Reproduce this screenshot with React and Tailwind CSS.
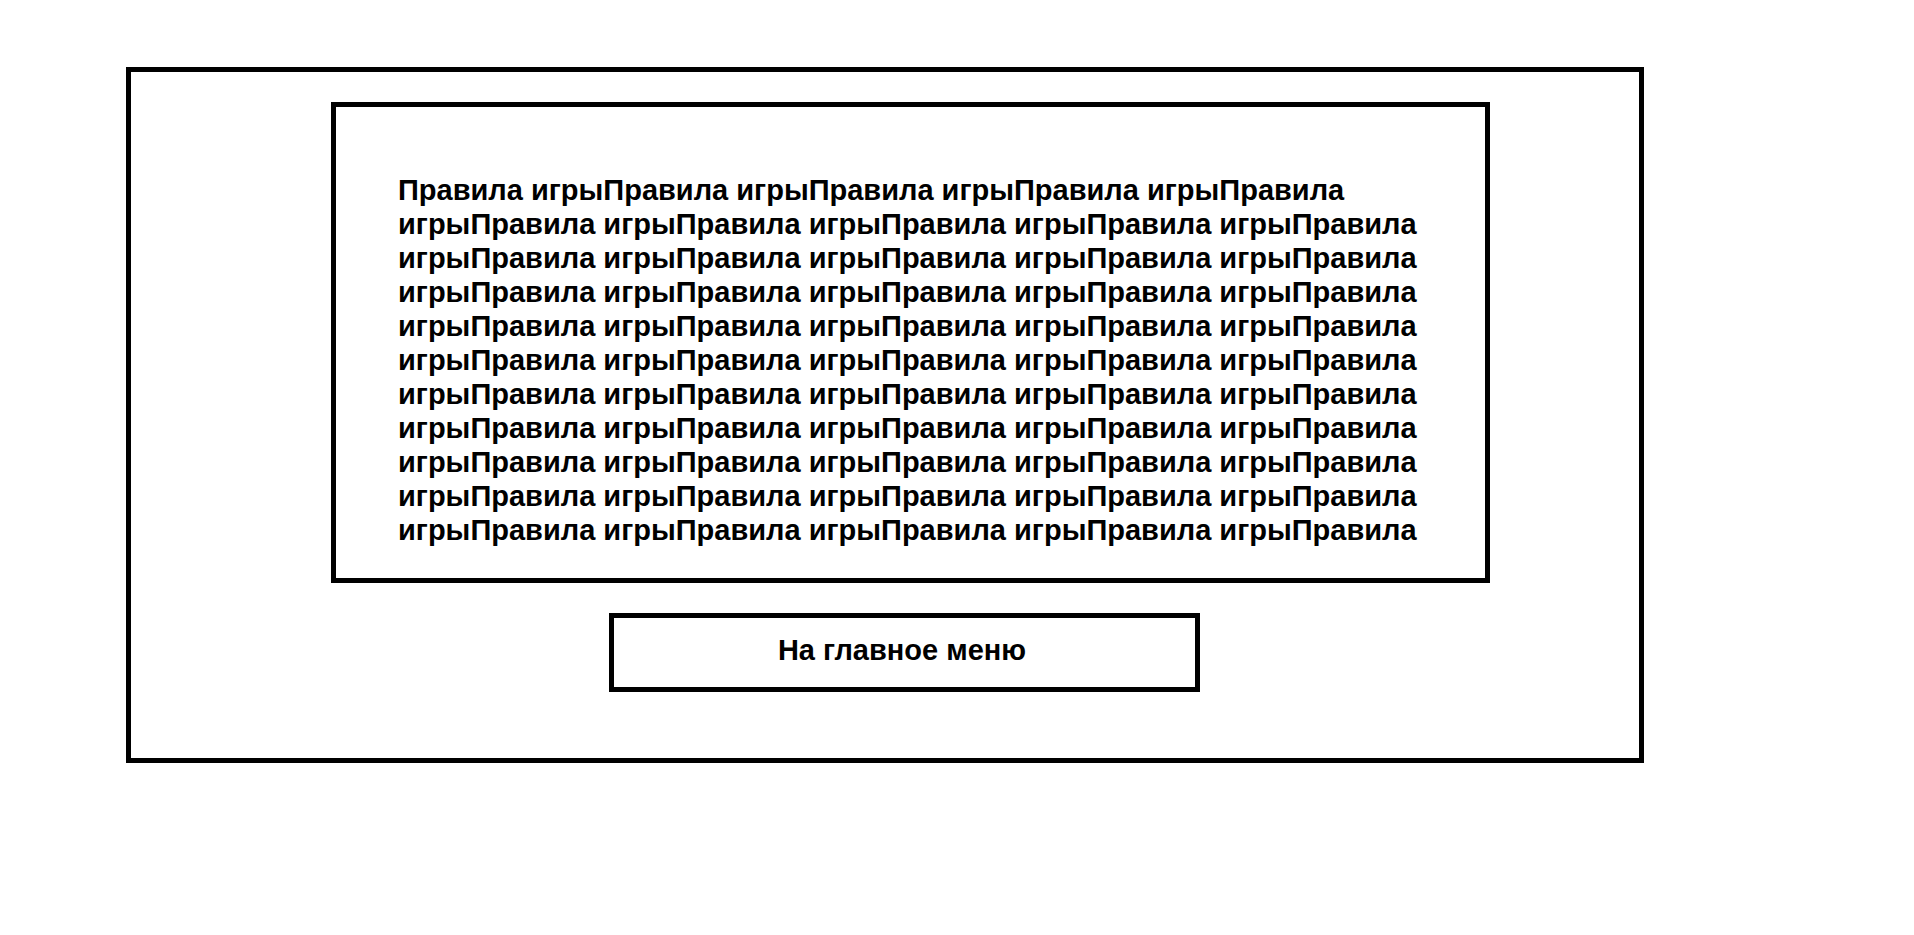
const RULES = "Правила игры".repeat(54) + "Правила";

export default function App() {
  return (
    <div className="min-h-screen bg-white pt-[67px] pl-[126px]" style={{ fontFamily: '"Liberation Sans", Arial, sans-serif' }}>
      <div className="w-[1518px] h-[696px] border-[5px] border-black pt-[30px] flex flex-col items-start">
        <div className="ml-[200px] w-[1159px] h-[481px] border-[5px] border-black pt-[66px] pl-[62px] pr-[20px]">
          <p className="text-[29px] leading-[34px] font-bold text-black">{RULES}</p>
        </div>
        <button className="mt-[30px] ml-[478px] w-[591px] h-[79px] border-[5px] border-black bg-white pr-[5px] pb-[4px] text-[29px] font-bold text-black flex items-center justify-center">
          На главное меню
        </button>
      </div>
    </div>
  );
}
